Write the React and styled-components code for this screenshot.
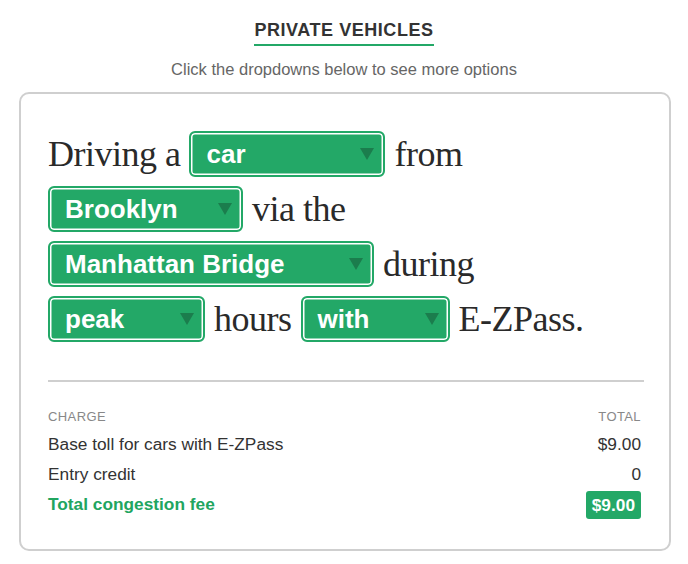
import * as React from 'react'
import styled, { createGlobalStyle } from 'styled-components'

const GREEN = '#23a867'
const DARK_GREEN = '#1b7d4d'

const GlobalStyle = createGlobalStyle`
  body {
    margin: 0;
    background: #fff;
    font-family: 'Liberation Sans', Arial, sans-serif;
  }
`

const lines = [
  [
    { text: 'Driving a' },
    { value: 'car', width: 196 },
    { text: 'from' },
  ],
  [
    { value: 'Brooklyn', width: 195 },
    { text: 'via the' },
  ],
  [
    { value: 'Manhattan Bridge', width: 326 },
    { text: 'during' },
  ],
  [
    { value: 'peak', width: 157 },
    { text: 'hours' },
    { value: 'with', width: 149 },
    { text: 'E-ZPass.' },
  ],
]

const charges = [
  { label: 'Base toll for cars with E-ZPass', amount: '$9.00' },
  { label: 'Entry credit', amount: '0' },
]

const Dropdown = ({ value, width }) => (
  <Select style={{ width }}>
    <SelectValue>{value}</SelectValue>
    <Arrow width='14' height='12' viewBox='0 0 14 12'>
      <path d='M0 0 L14 0 L7 12 Z' fill={DARK_GREEN} />
    </Arrow>
  </Select>
)

const App = () => (
  <Page>
    <GlobalStyle />
    <Heading>Private Vehicles</Heading>
    <Hint>Click the dropdowns below to see more options</Hint>
    <Card>
      <Sentence>
        {lines.map((parts, i) => (
          <Line key={i}>
            {parts.map((part, j) =>
              part.value ? (
                <Dropdown key={j} value={part.value} width={part.width} />
              ) : (
                <Words key={j}>{part.text}</Words>
              )
            )}
          </Line>
        ))}
      </Sentence>
      <Divider />
      <Table>
        <HeaderCell>Charge</HeaderCell>
        <HeaderCell right>Total</HeaderCell>
        {charges.map(c => (
          <React.Fragment key={c.label}>
            <Cell>{c.label}</Cell>
            <Cell right>{c.amount}</Cell>
          </React.Fragment>
        ))}
        <Cell total>Total congestion fee</Cell>
        <Cell right>
          <Badge>$9.00</Badge>
        </Cell>
      </Table>
    </Card>
  </Page>
)

export default App

const Page = styled.div`
  width: 688px;
  display: flex;
  flex-direction: column;
  align-items: center;
  padding-top: 19px;
`

const Heading = styled.h2`
  margin: 0;
  display: inline-block;
  font-size: 18px;
  line-height: 22px;
  font-weight: 700;
  letter-spacing: 0.55px;
  text-transform: uppercase;
  color: #333;
  padding-bottom: 3px;
  border-bottom: 2px solid ${GREEN};
`

const Hint = styled.p`
  margin: 14px 0 0;
  font-size: 16.5px;
  line-height: 18px;
  color: #666;
`

const Card = styled.section`
  box-sizing: border-box;
  align-self: stretch;
  margin: 14px 17px 0 19px;
  border: 2px solid #cfcfcf;
  border-radius: 10px;
  padding: 37px 25px 30px 27px;
`

const Sentence = styled.div`
  display: flex;
  flex-direction: column;
  gap: 9px;
`

const Line = styled.div`
  display: flex;
  align-items: center;
  gap: 9px;
  height: 46px;
`

const Words = styled.span`
  font-family: 'Liberation Serif', 'Times New Roman', serif;
  font-size: 36px;
  line-height: 46px;
  letter-spacing: -0.5px;
  color: #2a2a2a;
  white-space: nowrap;
`

const Select = styled.div`
  box-sizing: border-box;
  height: 46px;
  display: flex;
  align-items: center;
  justify-content: space-between;
  padding: 0 9px 0 15px;
  background: ${GREEN};
  border: 2px solid ${GREEN};
  border-radius: 6px;
  box-shadow: inset 0 0 0 1.5px #fff;
  cursor: pointer;
`

const SelectValue = styled.span`
  font-size: 26px;
  font-weight: 700;
  color: #fff;
  white-space: nowrap;
`

const Arrow = styled.svg`
  flex: none;
  display: block;
`

const Divider = styled.hr`
  margin: 38px 0 0;
  border: 0;
  height: 2px;
  background: #cfcfcf;
`

const Table = styled.div`
  display: grid;
  grid-template-columns: 1fr auto;
  padding: 27px 3px 0 0;
`

const HeaderCell = styled.div`
  font-size: 13px;
  line-height: 16px;
  letter-spacing: 0.4px;
  text-transform: uppercase;
  color: #888;
  margin-bottom: 4px;
  text-align: ${p => (p.right ? 'right' : 'left')};
`

const Cell = styled.div`
  font-size: 17.3px;
  line-height: 30px;
  color: ${p => (p.total ? '#21a55f' : '#333')};
  font-weight: ${p => (p.total ? 700 : 400)};
  text-align: ${p => (p.right ? 'right' : 'left')};
`

const Badge = styled.span`
  display: inline-block;
  padding: 0 6px;
  line-height: 28px;
  border-radius: 3px;
  background: ${GREEN};
  color: #fff;
  font-weight: 700;
  vertical-align: middle;
`
